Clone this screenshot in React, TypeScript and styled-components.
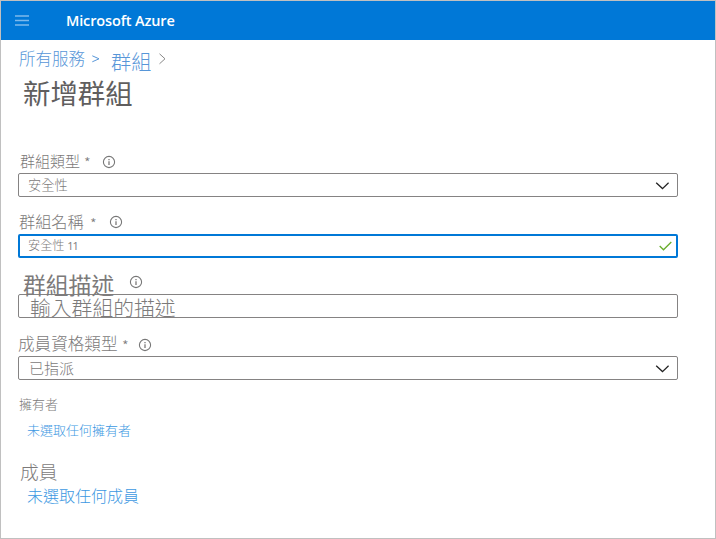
import React from "react";
import styled, { createGlobalStyle } from "styled-components";

const GlobalStyle = createGlobalStyle`
  * { box-sizing: border-box; }
  body { margin: 0; background: #fff; }
`;

const Page = styled.div`
  width: 716px;
  height: 539px;
  overflow: hidden;
  border: 1px solid #c0c0c0;
  background: #fff;
  font-family: "Noto Sans CJK TC", "Noto Sans", sans-serif;
  font-weight: 300;
  color: #7c7a7a;
`;

const Header = styled.header`
  display: flex;
  align-items: center;
  height: 39px;
  padding-left: 14px;
  gap: 37px;
  background: #0078d7;
`;

const Brand = styled.span`
  font: 600 14.5px/20px "Open Sans", "Noto Sans", sans-serif;
  color: #fff;
  letter-spacing: -0.14px;
  white-space: nowrap;
`;

const Crumbs = styled.nav`
  display: flex;
  height: 35px;
  padding: 6px 0 0 18px;
`;

const Text = styled.span<{ $size: number; $line: number; $top?: number; $width?: number; $weight?: number; $color?: string }>`
  display: block;
  flex: none;
  width: ${(p) => (p.$width ? `${p.$width}px` : "auto")};
  height: ${(p) => p.$line}px;
  margin-top: ${(p) => p.$top ?? 0}px;
  font-size: ${(p) => p.$size}px;
  line-height: ${(p) => p.$line}px;
  font-weight: ${(p) => p.$weight ?? "inherit"};
  color: ${(p) => p.$color ?? "inherit"};
  white-space: nowrap;
`;

const CurrentCrumb = styled(Text)`
  margin-left: 11px;
`;

const Digits = styled.span`
  font-family: "Open Sans", sans-serif;
  font-size: 11px;
  font-weight: 400;
  letter-spacing: -1px;
`;

const Title = styled.h1`
  height: 34px;
  margin: 0 0 40px;
  padding-left: 22px;
  font-size: 27.4px;
  line-height: 34px;
  font-weight: 400;
  color: #605e5e;
`;

const Field = styled.section<{ $gap: number }>`
  width: 677px;
  padding-left: 17px;
  margin-bottom: ${(p) => p.$gap}px;
`;

const LabelRow = styled.div<{ $height: number; $indent: number }>`
  display: flex;
  height: ${(p) => p.$height}px;
  padding-left: ${(p) => p.$indent}px;
`;

const Control = styled.div<{ $active?: boolean; $indent: number }>`
  display: flex;
  align-items: flex-start;
  justify-content: space-between;
  height: 24px;
  padding: 0 ${(p) => (p.$active ? 4 : 8)}px 0 ${(p) => p.$indent}px;
  border: ${(p) => (p.$active ? "2px solid #0078d7" : "1px solid #858383")};
  border-radius: 2px;
`;

const Icon = styled.svg<{ $top?: number }>`
  display: block;
  flex: none;
  margin-top: ${(p) => p.$top ?? 0}px;
  fill: none;
`;

const Group = styled.section<{ $top: number }>`
  padding: ${(p) => p.$top}px 0 0 18px;
`;

const GroupLabel = styled(Text)<{ $indent?: number }>`
  padding-left: ${(p) => p.$indent ?? 0}px;
`;

const Link = styled(Text)`
  padding-left: 8px;
  color: #3c98e2;
`;

const Info = ({ top }: { top: number }) => (
  <Icon width="14" height="14" viewBox="0 0 14 14" $top={top}>
    <circle cx="7" cy="7" r="5.6" stroke="#777" strokeWidth="1.1" />
    <path d="M7 6.2V10M7 4v1.2" stroke="#858383" strokeWidth="1.4" />
  </Icon>
);

const Down = () => (
  <Icon width="14" height="8" viewBox="0 0 14 8" $top={8}>
    <path d="M1.2.8 7.5 6.6 13.6.8" stroke="#222" strokeWidth="1.3" />
  </Icon>
);

const Required = ({ width, top }: { width: number; top: number }) => (
  <Text $size={15} $line={22} $width={width} $top={top}>
    *
  </Text>
);

export default function App() {
  return (
    <Page>
      <GlobalStyle />
      <Header>
        <Icon width="14" height="11" viewBox="0 0 14 11">
          <path d="M0 1h14M0 5.5h14M0 10h14" stroke="#7db9ec" strokeWidth="1.6" />
        </Icon>
        <Brand>Microsoft Azure</Brand>
      </Header>
      <Crumbs>
        <Text $size={16.5} $line={24} $width={73} $color="#5796d8">所有服務</Text>
        <Icon width="8" height="8" viewBox="0 0 8 8" $top={9}>
          <path d="M.3.8 7 3.8.3 6.8" stroke="#5796d8" />
        </Icon>
        <CurrentCrumb $size={20.2} $line={26} $top={3} $width={48} $color="#5796d8">
          群組
        </CurrentCrumb>
        <Icon width="10" height="12" viewBox="0 0 10 12" $top={7}>
          <path d="M.5.8 6 5.8l-5.5 5" stroke="#888" />
        </Icon>
      </Crumbs>
      <Title>新增群組</Title>

      <Field $gap={13}>
        <LabelRow $height={24} $indent={2}>
          <Text $size={15} $line={22} $top={1} $width={64}>群組類型</Text>
          <Required width={18} top={3} />
          <Info top={6} />
        </LabelRow>
        <Control $indent={9}>
          <Text $size={13.3} $line={22}>安全性</Text>
          <Down />
        </Control>
      </Field>

      <Field $gap={13}>
        <LabelRow $height={24} $indent={1}>
          <Text $size={16.2} $line={22} $width={71}>群組名稱</Text>
          <Required width={19} top={3} />
          <Info top={5} />
        </LabelRow>
        <Control $active $indent={8}>
          <Text $size={12.2} $line={18}>
            安全性 <Digits>11</Digits>
          </Text>
          <Icon width="13" height="11" viewBox="0 0 13 11" $top={5}>
            <path d="M.7 5 4.5 8.8 12.3 1" stroke="#69ad2d" strokeWidth="1.3" />
          </Icon>
        </Control>
      </Field>

      <Field $gap={14}>
        <LabelRow $height={23} $indent={5}>
          <Text $size={22.8} $line={28} $width={106} $weight={400}>群組描述</Text>
          <Info top={4} />
        </LabelRow>
        <Control $indent={11}>
          <Text $size={20.8} $line={24}>輸入群組的描述</Text>
        </Control>
      </Field>

      <Field $gap={0}>
        <LabelRow $height={24} $indent={0}>
          <Text $size={16.6} $line={22} $width={104}>成員資格類型</Text>
          <Required width={16} top={3} />
          <Info top={6} />
        </LabelRow>
        <Control $indent={10}>
          <Text $size={15} $line={22}>已指派</Text>
          <Down />
        </Control>
      </Field>

      <Group $top={13}>
        <GroupLabel $size={13} $line={22}>擁有者</GroupLabel>
        <Link $size={13} $line={20} $top={5}>未選取任何擁有者</Link>
      </Group>
      <Group $top={20}>
        <GroupLabel $size={18.7} $line={22} $indent={1}>成員</GroupLabel>
        <Link $size={16} $line={22} $top={2}>未選取任何成員</Link>
      </Group>
    </Page>
  );
}
